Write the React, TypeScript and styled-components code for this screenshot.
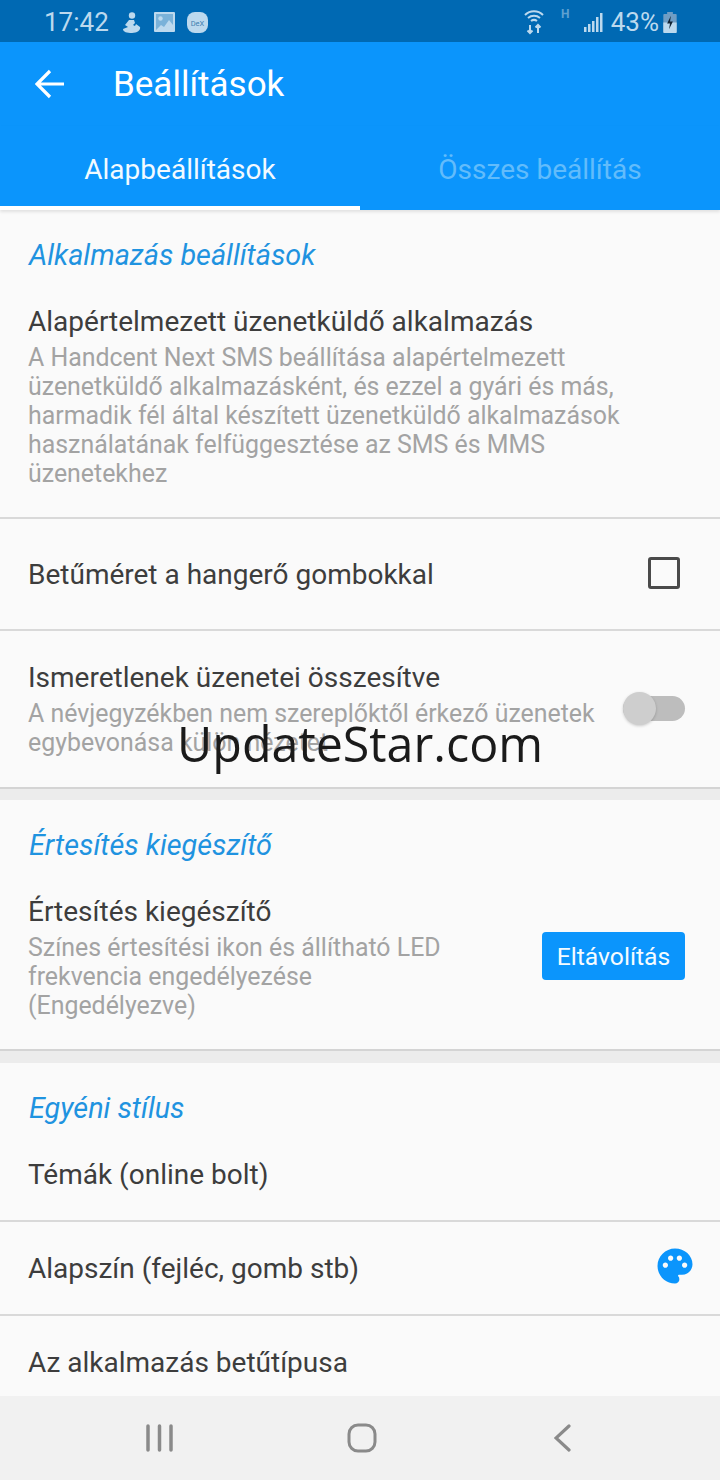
import React from 'react';
import styled, { createGlobalStyle } from 'styled-components';
import { MdPalette } from 'react-icons/md';

const Global = createGlobalStyle`
  html, body { margin: 0; padding: 0; background: #fafafa; }
  body { font-family: Roboto, "Noto Sans", sans-serif; }
`;

const Screen = styled.div`
  position: relative;
  width: 720px;
  height: 1480px;
  overflow: hidden;
  display: flex;
  flex-direction: column;
  background: #fafafa;
`;

const StatusBar = styled.div`
  height: 42px;
  flex: none;
  box-sizing: border-box;
  padding: 2px 43px 0 44px;
  background: #0069b3;
  color: #bcd9ee;
  display: flex;
  align-items: center;
  justify-content: space-between;
`;

const StatusGroup = styled.div`
  display: flex;
  align-items: center;
`;

const StatusText = styled.span<{ $left?: number }>`
  font-size: 26px;
  line-height: 40px;
  margin-left: ${(p) => p.$left ?? 0}px;
`;

const StatusIcon = styled.svg<{ $left?: number; $raise?: number; $dim?: boolean }>`
  margin-left: ${(p) => p.$left ?? 0}px;
  margin-top: ${(p) => -(p.$raise ?? 0)}px;
  opacity: ${(p) => (p.$dim ? 0.5 : 1)};
`;

const AppBar = styled.div`
  height: 84px;
  flex: none;
  background: #0b95fc;
  display: flex;
  align-items: center;
  padding-left: 35px;
  color: #fff;
`;

const Title = styled.div`
  font-size: 35px;
  margin-left: 48px;
`;

const Tabs = styled.div`
  height: 84px;
  flex: none;
  background: #0b95fc;
  display: flex;
  box-shadow: 0 2px 3px rgba(0, 0, 0, 0.1);
`;

const Tab = styled.div<{ $active?: boolean }>`
  width: 360px;
  display: flex;
  align-items: center;
  justify-content: center;
  font-size: 28px;
  color: ${(p) => (p.$active ? '#f2faff' : '#62bcfb')};
  border-bottom: 4px solid ${(p) => (p.$active ? '#fff' : 'transparent')};
  box-sizing: border-box;
  padding-top: 7px;
`;

const Content = styled.div`
  flex: 1;
  min-height: 0;
  overflow: hidden;
`;

const Gap = styled.div<{ $height: number }>`
  height: ${(p) => p.$height}px;
  border-top: 2px solid #d4d4d4;
  background: #ececec;
`;

const SectionTitle = styled.div`
  font-size: 28.8px;
  font-style: italic;
  color: #1f93e0;
  padding: 27px 29px 0;
  line-height: 36px;
  height: 63px;
  box-sizing: border-box;
`;

const Row = styled.div<{ $height: number; $line?: boolean; $top?: number; $center?: boolean }>`
  height: ${(p) => p.$height}px;
  box-sizing: border-box;
  display: flex;
  align-items: ${(p) => (p.$center ? 'center' : 'flex-start')};
  padding: ${(p) => p.$top ?? 0}px 35px 0 28px;
  border-bottom: ${(p) => (p.$line ? '2px solid #d9d9d9' : 'none')};
`;

const RowText = styled.div`
  flex: 1;
  min-width: 0;
`;

const RowTitle = styled.div`
  font-size: 28px;
  line-height: 36px;
  color: #3d3d3d;
`;

const RowDesc = styled.div`
  font-size: 24.9px;
  line-height: 29px;
  margin-top: 3px;
  color: #a3a3a3;
  white-space: nowrap;
`;

const Checkbox = styled.div`
  width: 32px;
  height: 32px;
  box-sizing: border-box;
  border: 3.5px solid #4a4a4a;
  border-radius: 3px;
  margin: -4px 5px 0 0;
`;

const Switch = styled.div`
  position: relative;
  width: 62px;
  height: 25px;
  border-radius: 13px;
  background: #bdbdbd;
  margin-top: 36px;
  flex: none;
`;

const Knob = styled.div`
  position: absolute;
  left: 0;
  top: -4px;
  width: 33px;
  height: 33px;
  border-radius: 50%;
  background: #cecece;
  box-shadow: 0 1px 3px rgba(0, 0, 0, 0.2);
`;

const Button = styled.div`
  width: 143px;
  height: 48px;
  flex: none;
  margin-top: 38px;
  border-radius: 4px;
  background: #0b95fc;
  color: #f4fbff;
  font-size: 24.7px;
  display: flex;
  align-items: center;
  justify-content: center;
`;

const NavBar = styled.div`
  height: 84px;
  flex: none;
  background: #f1f1f1;
  display: grid;
  grid-template-columns: 322px 1fr 1fr;
`;

const NavSlot = styled.div<{ $pad: number }>`
  display: flex;
  align-items: center;
  padding-left: ${(p) => p.$pad}px;
`;

const Watermark = styled.div`
  position: absolute;
  left: 177px;
  top: 710px;
  font-family: "Open Sans", sans-serif;
  font-size: 48.4px;
  line-height: 66px;
  color: #1a1a1a;
  white-space: nowrap;
`;

const Palette = styled(MdPalette)`
  color: #0b95fc;
  flex: none;
  margin: -6px -11px 0 0;
`;

const App = () => (
  <Screen>
    <Global />
    <StatusBar>
      <StatusGroup>
        <StatusText>17:42</StatusText>
        <StatusIcon width="19" height="21" viewBox="0 0 19 21" $left={13} fill="currentColor">
          <circle cx="10" cy="3.500" r="3.200" />
          <path d="M7 8h5l1 3-2 2 2 1 1-2 4 3c1 3-3 6-8 6-5 0-9-1-9-4l5-2-3-2z" />
        </StatusIcon>
        <StatusIcon width="21" height="20" viewBox="0 0 21 20" $left={13}>
          <rect width="21" height="20" fill="currentColor" rx="1" />
          <path d="M2 2h17v16H2z" fill="#0069b3" opacity="0.35" />
          <circle cx="6.500" cy="6.500" r="2.200" fill="#bcd9ee" />
          <path d="M2 18l5-5 3 2 5-7 4 5v5z" fill="#bcd9ee" />
        </StatusIcon>
        <StatusIcon width="21" height="21" viewBox="0 0 21 21" $left={12}>
          <rect width="21" height="21" rx="8" fill="currentColor" />
          <text x="10.500" y="13.500" textAnchor="middle" fontSize="7.500" fill="#3f7fb0" fontFamily="Roboto">DeX</text>
        </StatusIcon>
      </StatusGroup>
      <StatusGroup>
        <StatusIcon width="20" height="26" viewBox="0 0 20 26" fill="none" stroke="currentColor" strokeWidth="2">
          <path d="M1 6c5-5 13-5 18 0M4 9c3.500-3 8.500-3 12 0M7 12c2-1.500 4-1.500 6 0" />
          <path d="M6 16v8M3.500 21.500L6 24l2.500-2.500M14 24v-8M11.500 18.500L14 16l2.500 2.500" />
        </StatusIcon>
        <StatusIcon width="10" height="14" viewBox="0 0 10 14" $left={17} $raise={18} $dim>
          <text x="0" y="12" fontSize="12" fontWeight="700" fill="currentColor" fontFamily="Roboto">H</text>
        </StatusIcon>
        <StatusIcon width="19" height="20" viewBox="0 0 19 20" $left={13} fill="currentColor">
          <rect x="0" y="15" width="2.500" height="5" />
          <rect x="4" y="12" width="2.500" height="8" />
          <rect x="8" y="9" width="2.500" height="11" />
          <rect x="12" y="5" width="2.500" height="15" />
          <rect x="16" y="1" width="2.500" height="19" />
        </StatusIcon>
        <StatusText $left={8}>43%</StatusText>
        <StatusIcon width="14" height="21" viewBox="0 0 14 22" $left={4}>
          <path d="M4 0h6v2h3a1 1 0 011 1v18a1 1 0 01-1 1H1a1 1 0 01-1-1V3a1 1 0 011-1h3z" fill="#6f9dc4" />
          <path d="M0 11h14v10a1 1 0 01-1 1H1a1 1 0 01-1-1z" fill="currentColor" />
          <path d="M8 4L4 12h3l-1 6 4-8H7z" fill="#123" />
        </StatusIcon>
      </StatusGroup>
    </StatusBar>
    <AppBar>
      <svg width="30" height="30" viewBox="0 0 30 30" fill="none" stroke="#fff" strokeWidth="3.200">
        <path d="M29 15H3M15 2L2 15l13 13" />
      </svg>
      <Title>Beállítások</Title>
    </AppBar>
    <Tabs>
      <Tab $active>Alapbeállítások</Tab>
      <Tab>Összes beállítás</Tab>
    </Tabs>
    <Content>
      <section>
        <SectionTitle>Alkalmazás beállítások</SectionTitle>
        <Row $height={246} $line $top={31}>
          <RowText>
            <RowTitle>Alapértelmezett üzenetküldő alkalmazás</RowTitle>
            <RowDesc>
              A Handcent Next SMS beállítása alapértelmezett
              <br />
              üzenetküldő alkalmazásként, és ezzel a gyári és más,
              <br />
              harmadik fél által készített üzenetküldő alkalmazások
              <br />
              használatának felfüggesztése az SMS és MMS
              <br />
              üzenetekhez
            </RowDesc>
          </RowText>
        </Row>
        <Row $height={112} $line $center $top={2}>
          <RowText>
            <RowTitle>Betűméret a hangerő gombokkal</RowTitle>
          </RowText>
          <Checkbox />
        </Row>
        <Row $height={156} $top={29}>
          <RowText>
            <RowTitle>Ismeretlenek üzenetei összesítve</RowTitle>
            <RowDesc>
              A névjegyzékben nem szereplőktől érkező üzenetek
              <br />
              egybevonása külön nézetet
            </RowDesc>
          </RowText>
          <Switch>
            <Knob />
          </Switch>
        </Row>
      </section>
      <Gap $height={11} />
      <section>
        <SectionTitle>Értesítés kiegészítő</SectionTitle>
        <Row $height={186} $top={31}>
          <RowText>
            <RowTitle>Értesítés kiegészítő</RowTitle>
            <RowDesc>
              Színes értesítési ikon és állítható LED
              <br />
              frekvencia engedélyezése
              <br />
              (Engedélyezve)
            </RowDesc>
          </RowText>
          <Button>Eltávolítás</Button>
        </Row>
      </section>
      <Gap $height={12} />
      <section>
        <SectionTitle>Egyéni stílus</SectionTitle>
        <Row $height={96} $line $top={31}>
          <RowText>
            <RowTitle>Témák (online bolt)</RowTitle>
          </RowText>
        </Row>
        <Row $height={94} $line $center $top={2}>
          <RowText>
            <RowTitle>Alapszín (fejléc, gomb stb)</RowTitle>
          </RowText>
          <Palette size={42} />
        </Row>
        <Row $height={94} $center>
          <RowText>
            <RowTitle>Az alkalmazás betűtípusa</RowTitle>
          </RowText>
        </Row>
      </section>
    </Content>
    <NavBar>
      <NavSlot $pad={146}>
        <svg width="28" height="28" viewBox="0 0 28 28" fill="none" stroke="#8a8a8a" strokeWidth="3.500" strokeLinecap="round">
          <path d="M2 2v24M13.500 2v24M25 2v24" />
        </svg>
      </NavSlot>
      <NavSlot $pad={25}>
        <svg width="30" height="30" viewBox="0 0 30 30" fill="none" stroke="#8a8a8a" strokeWidth="3">
          <rect x="2" y="2" width="26" height="26" rx="9" />
        </svg>
      </NavSlot>
      <NavSlot $pad={33}>
        <svg width="18" height="28" viewBox="0 0 18 28" fill="none" stroke="#8a8a8a" strokeWidth="3.200" strokeLinecap="round">
          <path d="M15 2L2 14l13 12" />
        </svg>
      </NavSlot>
    </NavBar>
    <Watermark>UpdateStar.com</Watermark>
  </Screen>
);

export default App;
